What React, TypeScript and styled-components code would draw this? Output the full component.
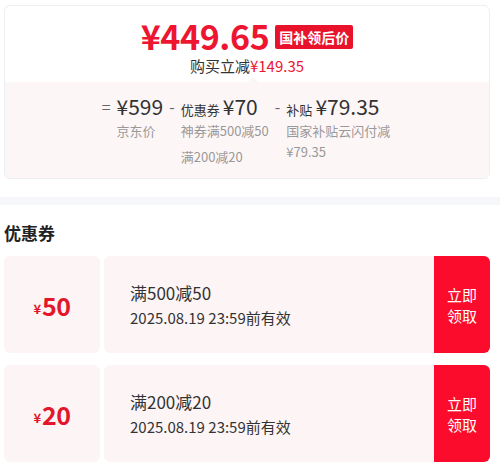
import React from "react";
import styled, { createGlobalStyle } from "styled-components";

const Global = createGlobalStyle`
  html, body { margin: 0; padding: 0; background: #fff; }
  body { font-family: "Noto Sans CJK SC", "Noto Sans", sans-serif; color: #333; }
`;

const Page = styled.div`
  width: 500px;
  height: 464px;
  overflow: hidden;
  display: flex;
  flex-direction: column;
  padding-top: 5px;
  box-sizing: border-box;
`;

const PriceCard = styled.section`
  margin: 0 10px 0 4px;
  border: 1px solid #eceef2;
  border-radius: 6px;
  overflow: hidden;
  display: flex;
  flex-direction: column;
`;

const Top = styled.div`
  display: flex;
  flex-direction: column;
  align-items: center;
  padding: 12px 0 0;
  height: 76px;
  box-sizing: border-box;
`;

const PriceLine = styled.div`
  display: flex;
  align-items: center;
  gap: 6px;
  height: 36px;
`;

const BigPrice = styled.span`
  color: #ed1530;
  font-size: 34px;
  font-weight: 700;
  line-height: 36px;
  letter-spacing: -0.4px;
`;

const Badge = styled.span`
  background: #e8132b;
  color: #fff;
  font-size: 14px;
  font-weight: 700;
  line-height: 24px;
  padding: 0 4px;
  border-radius: 2px;
  margin-top: 2px;
`;

const Saving = styled.div`
  font-size: 15px;
  line-height: 20px;
  color: #333;
  margin-top: 2px;
`;

const Red = styled.span`
  color: #ed1530;
`;

const Breakdown = styled.div`
  position: relative;
  background: #fdf6f7;
  display: flex;
  justify-content: center;
  gap: 6px;
  padding: 10px 0 14px;
  height: 96px;
  box-sizing: border-box;
  &::before {
    content: "";
    position: absolute;
    top: -5px;
    left: 243px;
    border-left: 5px solid transparent;
    border-right: 5px solid transparent;
    border-bottom: 5px solid #fdf6f7;
  }
`;

const Col = styled.div`
  display: flex;
  gap: 6px;
`;

const Sign = styled.span`
  color: #666;
  font-size: 16px;
  line-height: 28px;
`;

const ColBody = styled.div<{ $w?: number }>`
  display: flex;
  flex-direction: column;
  max-width: ${(p) => (p.$w ? `${p.$w}px` : "none")};
`;

const MainLine = styled.div`
  display: flex;
  align-items: baseline;
  gap: 3px;
  line-height: 28px;
  height: 28px;
`;

const Label = styled.span`
  font-size: 13px;
  color: #333;
`;

const Amount = styled.span`
  font-size: 21px;
  color: #333;
  font-weight: 400;
`;

const Sub = styled.div<{ $gap?: number }>`
  font-size: 13px;
  color: #999;
  line-height: 21px;
  margin-top: ${(p) => p.$gap ?? 0}px;
`;

const Band = styled.div`
  height: 8px;
  background: #f5f7fb;
  margin-top: 18px;
`;

const Heading = styled.h2`
  margin: 17px 0 0 4px;
  font-size: 17px;
  font-weight: 700;
  color: #222;
  line-height: 22px;
`;

const CouponList = styled.div`
  display: flex;
  flex-direction: column;
  gap: 12px;
  margin: 12px 10px 0 4px;
`;

const Coupon = styled.div`
  display: flex;
  height: 97px;
`;

const Value = styled.div`
  width: 96px;
  background: #fdf4f5;
  border-radius: 6px;
  display: flex;
  align-items: center;
  justify-content: center;
  color: #e4162b;
  font-weight: 700;
`;

const Yen = styled.span`
  font-size: 13px;
  margin-top: 7px;
  margin-right: 1px;
`;

const ValueNum = styled.span`
  font-size: 25px;
  letter-spacing: -0.5px;
`;

const Divider = styled.div`
  width: 4px;
  position: relative;
  &::before,
  &::after {
    content: "";
    position: absolute;
    left: -2px;
    width: 8px;
    height: 8px;
    border-radius: 50%;
    background: #fff;
  }
  &::before { top: -4px; }
  &::after { bottom: -4px; }
`;

const Info = styled.div`
  flex: 1;
  background: #fdf4f5;
  border-radius: 6px 0 0 6px;
  display: flex;
  flex-direction: column;
  justify-content: center;
  padding-left: 26px;
  gap: 2px;
`;

const Title = styled.div`
  font-size: 17px;
  color: #333;
  line-height: 23px;
`;

const Expire = styled.div`
  font-size: 15px;
  color: #333;
  line-height: 23px;
`;

const Claim = styled.button`
  width: 56px;
  border: none;
  background: #fb0c2c;
  color: #fff;
  border-radius: 0 6px 6px 0;
  font-family: inherit;
  font-size: 15px;
  line-height: 21px;
  padding: 0 13px;
  cursor: pointer;
`;

const coupons = [
  { value: "50", title: "满500减50", expire: "2025.08.19 23:59前有效" },
  { value: "20", title: "满200减20", expire: "2025.08.19 23:59前有效" },
];

export default function App() {
  return (
    <>
      <Global />
      <Page>
        <PriceCard>
          <Top>
            <PriceLine>
              <BigPrice>¥449.65</BigPrice>
              <Badge>国补领后价</Badge>
            </PriceLine>
            <Saving>
              购买立减<Red>¥149.35</Red>
            </Saving>
          </Top>
          <Breakdown>
            <Col>
              <Sign>=</Sign>
              <ColBody>
                <MainLine>
                  <Amount>¥599</Amount>
                </MainLine>
                <Sub>京东价</Sub>
              </ColBody>
            </Col>
            <Col>
              <Sign>-</Sign>
              <ColBody>
                <MainLine>
                  <Label>优惠券</Label>
                  <Amount>¥70</Amount>
                </MainLine>
                <Sub>神券满500减50</Sub>
                <Sub $gap={5}>满200减20</Sub>
              </ColBody>
            </Col>
            <Col>
              <Sign>-</Sign>
              <ColBody $w={106}>
                <MainLine>
                  <Label>补贴</Label>
                  <Amount>¥79.35</Amount>
                </MainLine>
                <Sub>国家补贴云闪付减¥79.35</Sub>
              </ColBody>
            </Col>
          </Breakdown>
        </PriceCard>
        <Band />
        <Heading>优惠券</Heading>
        <CouponList>
          {coupons.map((c) => (
            <Coupon key={c.title}>
              <Value>
                <Yen>¥</Yen>
                <ValueNum>{c.value}</ValueNum>
              </Value>
              <Divider />
              <Info>
                <Title>{c.title}</Title>
                <Expire>{c.expire}</Expire>
              </Info>
              <Claim>立即领取</Claim>
            </Coupon>
          ))}
        </CouponList>
      </Page>
    </>
  );
}
